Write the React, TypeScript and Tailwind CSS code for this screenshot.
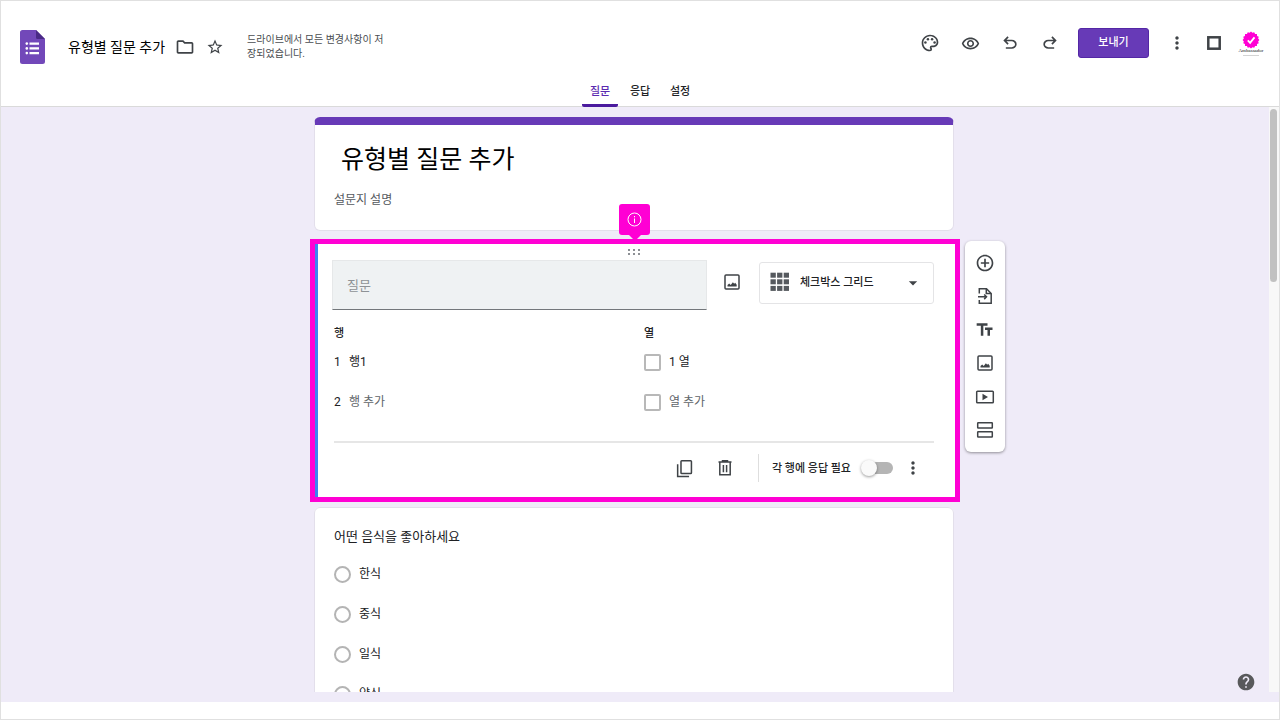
import type { ReactNode } from "react";
import {
  MdAddCircleOutline,
  MdArrowDropDown,
  MdFormatSize,
  MdHelp,
  MdMoreVert,
  MdOutlineFolder,
  MdOutlinePalette,
  MdOutlineRemoveRedEye,
  MdStarBorder,
} from "react-icons/md";

type IconProps = { className?: string };

function FormsLogo() {
  return (
    <svg width="25" height="34" viewBox="0 0 25 34" aria-hidden="true">
      <path d="M2.5 0H16l9 9v22.5a2.5 2.5 0 0 1-2.500 2.500h-20A2.500 2.500 0 0 1 0 31.500v-29A2.500 2.500 0 0 1 2.500 0z" fill="#7248b9" />
      <path d="M16 0l9 9h-7.500A1.500 1.500 0 0 1 16 7.500z" fill="#4a2a86" />
      <path d="M9.500 12.500H19v2.200H9.500zM9.500 17.300H19v2.200H9.500zM9.500 22H19v2.200H9.500z" fill="#fff" />
      <circle cx="6.800" cy="13.600" r="1.300" fill="#fff" />
      <circle cx="6.800" cy="18.400" r="1.300" fill="#fff" />
      <circle cx="6.800" cy="23.100" r="1.300" fill="#fff" />
    </svg>
  );
}

function UndoIcon({ className = "" }: IconProps) {
  return (
    <svg viewBox="0 -960 960 960" fill="currentColor" className={className} aria-hidden="true">
      <path d="M280-200v-80h284q63 0 109.500-40T720-420q0-60-46.500-100T564-560H312l104 104-56 56-200-200 200-200 56 56-104 104h252q97 0 169.500 63T800-420q0 94-72.500 157T564-200H280Z" />
    </svg>
  );
}

function PhotoIcon({ className = "" }: IconProps) {
  return (
    <svg viewBox="0 0 20 20" fill="none" className={className} aria-hidden="true">
      <rect x="3" y="3" width="14" height="14" rx="1" stroke="currentColor" strokeWidth="1.500" />
      <path d="M5.500 14.500v-1.500l1.700-1.600 1.500 1.500 2.200-2.600 1.300 1.500 1-1 1.500 2v1.700z" fill="currentColor" />
    </svg>
  );
}

function ImportIcon({ className = "" }: IconProps) {
  return (
    <svg viewBox="0 0 20 20" fill="none" stroke="currentColor" strokeWidth="1.500" className={className} aria-hidden="true">
      <path d="M4.300 7.500V2.800h7.200L16.200 7.500v9.700H4.300V14" />
      <path d="M11.300 3v4.500h4.700" />
      <path d="M3 10.800h8.500M9.200 8.500l2.300 2.300-2.300 2.300" />
    </svg>
  );
}

function VideoIcon({ className = "" }: IconProps) {
  return (
    <svg viewBox="0 0 20 20" fill="none" className={className} aria-hidden="true">
      <rect x="1.700" y="4.200" width="16.600" height="11.600" rx="0.800" stroke="currentColor" strokeWidth="1.500" />
      <path d="M7.500 6.800v6.400l5.500-3.200z" fill="currentColor" />
    </svg>
  );
}

function SectionIcon({ className = "" }: IconProps) {
  return (
    <svg viewBox="0 0 20 20" fill="none" stroke="currentColor" strokeWidth="1.500" className={className} aria-hidden="true">
      <rect x="2.700" y="2.700" width="14.600" height="5.400" rx="0.500" />
      <rect x="2.700" y="11.700" width="14.600" height="5.400" rx="0.500" />
    </svg>
  );
}

function CopyIcon({ className = "" }: IconProps) {
  return (
    <svg viewBox="0 0 20 20" fill="none" stroke="currentColor" strokeWidth="1.600" className={className} aria-hidden="true">
      <rect x="6.300" y="1.800" width="11" height="13.400" rx="0.800" />
      <path d="M2.800 5.500v13h12" />
    </svg>
  );
}

function TrashIcon({ className = "" }: IconProps) {
  return (
    <svg viewBox="0 0 20 20" fill="none" stroke="currentColor" strokeWidth="1.500" className={className} aria-hidden="true">
      <path d="M3.500 4h13M7.500 4V2.800h5V4M4.800 4.500v12.200h10.400V4.500M8.400 7v7.300M11.600 7v7.300" />
    </svg>
  );
}

function GridIcon() {
  const cells = [0, 6.6, 13.2];
  return (
    <svg width="20" height="20" viewBox="0 0 20 20" fill="#55595e" className="-mt-0.5 shrink-0" aria-hidden="true">
      {cells.map((y) => cells.map((x) => <rect key={`${x}-${y}`} x={x + 0.5} y={y + 0.7} width="5.300" height="5" />))}
    </svg>
  );
}

function DragDots() {
  return (
    <svg width="14" height="8" viewBox="0 0 14 8" fill="#8d9095" aria-hidden="true">
      {[1, 5].map((y) => [1, 6, 11].map((x) => <rect key={`${x}-${y}`} x={x} y={y} width="2" height="2" />))}
    </svg>
  );
}

function Avatar() {
  const points = Array.from({ length: 32 }, (_, i) => {
    const r = i % 2 ? 7.3 : 8.4;
    const a = (i * Math.PI) / 16;
    return `${(9 + r * Math.cos(a)).toFixed(2)},${(9 + r * Math.sin(a)).toFixed(2)}`;
  }).join(" ");
  return (
    <span className="flex w-7 flex-col items-center">
      <svg width="18" height="18" viewBox="0 0 18 18" aria-hidden="true">
        <polygon points={points} fill="#ff00d4" />
        <path d="M5.800 9.400l2.300 2.400 4.400-5.400" fill="none" stroke="#fff" strokeWidth="1.800" />
      </svg>
      <span className="font-['Liberation_Serif',serif] text-[5px] leading-[4px] text-neutral-900">Ambassador</span>
      <span className="mt-0.5 h-px w-4 bg-neutral-300" />
    </span>
  );
}

function IconButton({ label, className = "", children }: { label: string; className?: string; children: ReactNode }) {
  return (
    <button
      type="button"
      aria-label={label}
      className={`flex size-5 shrink-0 items-center justify-center text-[#3f4347] ${className}`}
    >
      {children}
    </button>
  );
}

const tabs = ["질문", "응답", "설정"];
const foods = ["한식", "중식", "일식", "양식"];

function Header() {
  return (
    <header className="shrink-0 border-b border-[#dadada] bg-white">
      <div className="flex h-21 items-center pr-3.5 pl-[19px]">
        <div className="mt-2 flex items-center">
          <FormsLogo />
          <h1 className="ml-[23px] text-sm leading-5 text-black">유형별 질문 추가</h1>
          <IconButton label="폴더로 이동" className="ml-2.5">
            <MdOutlineFolder className="size-5" />
          </IconButton>
          <IconButton label="별표" className="ml-2.5">
            <MdStarBorder className="size-[18px]" />
          </IconButton>
          <p className="ml-[22px] w-[138px] text-[10px] leading-[14px] break-all text-[#4a4d51]">
            드라이브에서 모든 변경사항이 저장되었습니다.
          </p>
        </div>
        <div className="ml-auto flex items-center">
          <div className="flex items-center gap-5">
            <IconButton label="테마 맞춤설정">
              <MdOutlinePalette className="size-5" />
            </IconButton>
            <IconButton label="미리보기">
              <MdOutlineRemoveRedEye className="size-[19px]" />
            </IconButton>
            <IconButton label="실행취소">
              <UndoIcon className="size-5" />
            </IconButton>
            <IconButton label="재실행">
              <UndoIcon className="size-5 -scale-x-100" />
            </IconButton>
          </div>
          <button type="button" className="ml-[18px] h-[30px] w-[71px] rounded-[3px] border border-[#5327a5] bg-[#673ab7] text-[11px] font-medium text-white">
            보내기
          </button>
          <IconButton label="더보기" className="ml-[18px]">
            <MdMoreVert className="size-5" />
          </IconButton>
          <IconButton label="앱" className="ml-[17px]">
            <svg width="14" height="14" viewBox="0 0 14 14" fill="none" stroke="currentColor" strokeWidth="2.500" aria-hidden="true">
              <rect x="1.300" y="1.300" width="11.400" height="11.400" />
            </svg>
          </IconButton>
          <button type="button" aria-label="계정" className="ml-[13px]">
            <Avatar />
          </button>
        </div>
      </div>
      <nav className="-mb-px flex justify-center gap-1">
        {tabs.map((tab, i) => (
          <a
            key={tab}
            href="#"
            className={`h-[22px] w-9 border-b-3 text-center text-[11px] leading-[14px] font-medium ${
              i === 0 ? "rounded-b-xs border-[#4a1a9e] text-[#5b2bb0]" : "border-transparent text-[#202124]"
            }`}
          >
            {tab}
          </a>
        ))}
      </nav>
    </header>
  );
}

function QuestionEditor() {
  return (
    <section className="relative border-5 border-[#ff00d4] bg-white">
      <div className="absolute -top-10 left-[304px] flex size-[31px] items-center justify-center rounded-[3px] bg-[#ff00d4]">
        <svg width="15" height="15" viewBox="0 0 15 15" fill="none" stroke="#fff" aria-hidden="true">
          <circle cx="7.500" cy="7.500" r="6.500" />
          <path d="M7.500 6.500v4.500M7.500 4v1.300" />
        </svg>
        <svg width="12" height="6" viewBox="0 0 12 6" className="absolute top-full" aria-hidden="true">
          <path d="M0 0h12L6 6z" fill="#ff00d4" />
        </svg>
      </div>
      <div className="border-l-3 border-[#3d82ee] pr-[21px] pb-1 pl-4">
        <div className="flex h-4 items-center justify-center">
          <DragDots />
        </div>
        <div className="-ml-0.5 flex items-center">
          <input
            type="text"
            aria-label="질문"
            placeholder="질문"
            className="h-[50px] min-w-0 flex-1 border border-b-[#73777b] border-[#e6e8e9] bg-[#eff2f3] px-3.5 text-[13px] placeholder:text-[#8e9296]"
          />
          <IconButton label="이미지 추가" className="mr-[17px] ml-[15px] -mt-1.5">
            <PhotoIcon className="size-5" />
          </IconButton>
          <div className="-mt-1 flex h-[42px] w-[175px] items-center rounded-[3px] border border-[#e4e4e6] pr-2.5 pl-2.5">
            <GridIcon />
            <select aria-label="질문 유형" className="ml-2.5 min-w-0 flex-1 appearance-none bg-transparent text-[11px] font-medium text-[#202124]">
              <option>체크박스 그리드</option>
            </select>
            <MdArrowDropDown className="size-5 text-[#3f4347]" />
          </div>
        </div>
        <div className="mt-4 grid grid-cols-2 gap-5 text-xs">
          <div>
            <h2 className="text-[11px] leading-4 font-medium">행</h2>
            <div className="flex h-10 items-center">
              <label htmlFor="row-1" className="w-[15px]">1</label>
              <input id="row-1" defaultValue="행1" className="min-w-0 flex-1" />
            </div>
            <div className="flex h-10 items-center">
              <label htmlFor="row-2" className="w-[15px]">2</label>
              <input id="row-2" placeholder="행 추가" className="min-w-0 flex-1 placeholder:text-[#606469]" />
            </div>
          </div>
          <div>
            <h2 className="text-[11px] leading-4 font-medium">열</h2>
            <div className="flex h-10 items-center gap-2">
              <input type="checkbox" aria-label="1 열 선택" className="size-[17px] appearance-none rounded-[2px] border-2 border-[#b8b8b8]" />
              <input aria-label="열 이름" defaultValue="1 열" className="min-w-0 flex-1" />
            </div>
            <div className="flex h-10 items-center gap-2">
              <input type="checkbox" aria-label="새 열 선택" className="size-[17px] appearance-none rounded-[2px] border-2 border-[#b8b8b8]" />
              <input aria-label="새 열 이름" placeholder="열 추가" className="min-w-0 flex-1 placeholder:text-[#606469]" />
            </div>
          </div>
        </div>
        <div className="mt-[19px] flex h-[52px] items-center justify-end border-t-2 border-[#e6e6e6]">
          <IconButton label="복사">
            <CopyIcon className="size-[19px]" />
          </IconButton>
          <IconButton label="삭제" className="ml-5">
            <TrashIcon className="size-5" />
          </IconButton>
          <span className="ml-[23px] h-7 w-px bg-[#dedede]" />
          <label htmlFor="required" className="ml-[13px] pt-0.5 text-[11px] font-medium">각 행에 응답 필요</label>
          <input
            id="required"
            type="checkbox"
            role="switch"
            className="relative ml-3.5 h-3 w-7 appearance-none rounded-full bg-[#b5b5b5] before:absolute before:-top-0.5 before:-left-1 before:size-4 before:rounded-full before:bg-[#fafafa] before:shadow-[0_1px_3px_rgba(0,0,0,0.400)]"
          />
          <IconButton label="옵션 더보기" className="mr-[11px] ml-2.5">
            <MdMoreVert className="size-5" />
          </IconButton>
        </div>
      </div>
    </section>
  );
}

function Toolbar() {
  return (
    <aside className="mt-0.5 ml-[5px] flex h-[211px] w-10 flex-col items-center justify-between rounded-md bg-white py-3 shadow-[0_1px_3px_rgba(0,0,0,0.400)]">
      <IconButton label="질문 추가">
        <MdAddCircleOutline className="size-5" />
      </IconButton>
      <IconButton label="질문 가져오기">
        <ImportIcon className="size-5" />
      </IconButton>
      <IconButton label="제목 및 설명 추가">
        <MdFormatSize className="size-5 -scale-x-100" />
      </IconButton>
      <IconButton label="이미지 추가">
        <PhotoIcon className="size-5" />
      </IconButton>
      <IconButton label="동영상 추가">
        <VideoIcon className="size-5" />
      </IconButton>
      <IconButton label="섹션 추가">
        <SectionIcon className="size-5" />
      </IconButton>
    </aside>
  );
}

export default function App() {
  return (
    <div className="flex h-screen flex-col border border-[#e0e0e0] bg-white font-[Roboto,'Noto_Sans_CJK_KR',sans-serif] text-[#202124] [&_svg]:shrink-0">
      <Header />
      <div className="relative flex min-h-0 flex-1 flex-col bg-[#efebf8] pb-2.5">
        <main className="flex min-h-0 flex-1 overflow-hidden">
          <div className="grid min-w-0 flex-1 grid-cols-[1fr_650px_1fr] content-start pt-2.5">
            <div className="col-start-2 mr-1.5 mb-2 ml-1 h-[114px] rounded-md border border-t-8 border-[#e3dfeb] border-t-[#673ab7] bg-white px-[19px] pt-[18px]">
              <input
                aria-label="설문지 제목"
                defaultValue="유형별 질문 추가"
                className="block h-[34px] w-full px-[7px] text-[25px] leading-[34px] text-black"
              />
              <input aria-label="설문지 설명" placeholder="설문지 설명" className="mt-3.5 block h-[18px] w-full text-xs placeholder:text-[#55595e]" />
            </div>
            <div className="col-start-2 mb-[5px]">
              <QuestionEditor />
            </div>
            <Toolbar />
            <fieldset className="col-start-2 mr-1.5 ml-1 rounded-md border border-[#e3dfeb] bg-white px-[19px] pt-[21px] text-xs">
              <legend className="float-left mb-[9px] w-full text-[13px] leading-4">어떤 음식을 좋아하세요</legend>
              {foods.map((food) => (
                <label key={food} className="flex h-10 w-full items-center gap-2">
                  <input type="radio" name="food" className="size-[17px] appearance-none rounded-full border-2 border-[#b4b4b4]" />
                  {food}
                </label>
              ))}
            </fieldset>
          </div>
          <div className="w-2.5 bg-[#f8f8f8] pt-0.5">
            <div className="ml-px h-[173px] w-[7px] rounded-full bg-[#c1c1c1]" />
          </div>
        </main>
        <button type="button" aria-label="도움말" className="absolute right-[23px] bottom-2.5">
          <MdHelp className="size-5 text-[#58595b]" />
        </button>
      </div>
      <footer className="h-[17px] shrink-0 bg-white" />
    </div>
  );
}
